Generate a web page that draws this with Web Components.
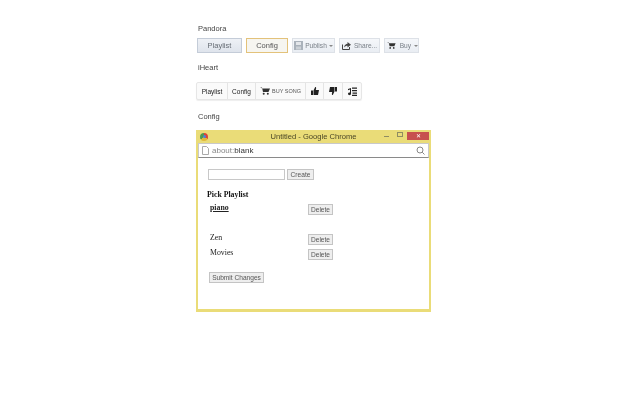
<!DOCTYPE html>
<html>
<head>
<meta charset="utf-8">
<title>Playlist config</title>
<style>
  body { margin: 0; background: #fff; font-family: "Liberation Sans", sans-serif; color: #444; }
  #page { display: flex; flex-direction: column; align-items: flex-start; padding: 24px 0 0 196px; will-change: transform; }
</style>
</head>
<body>
<div id="page">
  <section-label style="height:14px">Pandora</section-label>
  <pandora-bar></pandora-bar>
  <section-label style="margin-top:10px;height:18px">iHeart</section-label>
  <iheart-bar></iheart-bar>
  <section-label style="margin-top:12px;height:18px">Config</section-label>
  <chrome-window>
    <playlist-form></playlist-form>
  </chrome-window>
</div>

<script>
class SectionLabel extends HTMLElement {
  constructor(){
    super();
    this.attachShadow({mode: 'open'}).innerHTML = `
    <style>
      :host { display: block; padding-left: 2px; font-size: 7.5px; line-height: 9px; color: #444; }
    </style>
    <slot></slot>`;
  }
}

class PandoraBar extends HTMLElement {
  constructor(){
    super();
    this.attachShadow({mode: 'open'}).innerHTML = `
    <style>
      :host { display: flex; gap: 4px; padding-left: 1px; font-size: 6.6px; color: #7a8088; }
      .btn {
        display: flex; align-items: center; justify-content: center; gap: 2px;
        height: 15px; box-sizing: border-box;
        border: 1px solid #dde1e7; background: linear-gradient(#f5f7fa, #e9edf3);
      }
      .tab { font-size: 7.5px; color: #666c74; background: linear-gradient(#eef1f6, #dfe4ec); border-color: #c4ccd8; }
      .on { background: #f6f5f0; border-color: #e3c27a; color: #555; }
      .caret { width: 0; height: 0; border: 2px solid transparent; border-top-color: #888; border-bottom: 0; }
      svg { display: block; }
    </style>
    <div class="btn tab" style="width:45px">Playlist</div>
    <div class="btn tab on" style="width:42px">Config</div>
    <div class="btn" style="width:43px">
      <svg width="9" height="9" viewBox="0 0 9 9"><rect width="9" height="9" fill="#aab2bb"/><rect x="2" y="1" width="5" height="3" fill="#e3e6ea"/><rect x="2" y="5.500" width="5" height="3" fill="#ccd1d7"/></svg>
      Publish<span class="caret"></span>
    </div>
    <div class="btn" style="width:41px;gap:3px">
      <svg width="9" height="9" viewBox="0 0 9 9"><path d="M.5 3.500v5h7V6" fill="none" stroke="#444"/><path d="M2 6.500C2.400 4 4 2.800 5.500 2.800V1L9 3.800 5.500 6.500V4.800C4 4.800 3 5.300 2 6.500z" fill="#444"/></svg>
      Share...
    </div>
    <div class="btn" style="width:35px;gap:3px;padding-left:2px">
      <svg width="9" height="7" viewBox="0 0 10 8" style="margin-right:1px"><path d="M0 .5h2l1 4.500h5.500L10 1.500H2.500z" fill="#333"/><circle cx="3.700" cy="6.800" r="1" fill="#333"/><circle cx="7.800" cy="6.800" r="1" fill="#333"/></svg>
      Buy<span class="caret"></span>
    </div>`;
  }
}

class IheartBar extends HTMLElement {
  constructor(){
    super();
    this.attachShadow({mode: 'open'}).innerHTML = `
    <style>
      :host {
        display: flex; height: 18px; box-sizing: border-box; margin-top: 1px;
        border: 1px solid #e6e6e6; border-radius: 2px; background: #fafafa;
        font-size: 6.5px; color: #222; box-shadow: 0 1px 1px #eee;
      }
      div { display: flex; align-items: center; justify-content: center; gap: 2px; border-right: 1px solid #e4e4e4; box-sizing: border-box; }
      div:last-child { border-right: 0; }
      .buy { font-size: 5.500px; color: #555; }
      svg { display: block; }
    </style>
    <div style="width:31px">Playlist</div>
    <div style="width:28px">Config</div>
    <div class="buy" style="width:50px">
      <svg width="10" height="8" viewBox="0 0 10 8"><path d="M0 .5h2l1 4.500h5.500L10 1.500H2.500z" fill="#333"/><circle cx="3.700" cy="6.800" r="1" fill="#333"/><circle cx="7.800" cy="6.800" r="1" fill="#333"/></svg>
      BUY SONG
    </div>
    <div style="width:18px">
      <svg width="8" height="8" viewBox="0 0 8 8"><rect y="3.500" width="2" height="4.500" fill="#222"/><path d="M2.500 3.500 4.200 0c.8 0 1.100.7.900 1.500L4.800 3H8L7 8H2.500z" fill="#222"/></svg>
    </div>
    <div style="width:19px">
      <svg width="8" height="8" viewBox="0 0 8 8"><rect x="6" width="2" height="4.500" fill="#222"/><path d="M5.500 4.500 3.800 8c-.8 0-1.100-.7-.9-1.500L3.200 5H0L1 0h4.500z" fill="#222"/></svg>
    </div>
    <div style="width:18px">
      <svg width="9" height="9" viewBox="0 0 9 9"><path d="M4 .5h5v1.200H4zM4 3h5v1.200H4zM4.500 5.500h4.500v1.200H4.500zM4 7.800h5V9H4z" fill="#222"/><path d="M3 1v5.800a1.500 1.300 0 1 1-1-1.200V2.500L0 3.200V2z" fill="#222"/></svg>
    </div>`;
  }
}

class ChromeWindow extends HTMLElement {
  constructor(){
    super();
    this.attachShadow({mode: 'open'}).innerHTML = `
    <style>
      :host {
        display: block; width: 235px; height: 182px; box-sizing: border-box;
        background: #eadc78; padding: 0 2px 3px; color: #444;
        font-family: "Liberation Sans", sans-serif;
      }
      .title { display: grid; grid-template-columns: 1fr auto 1fr; align-items: center; height: 13px; font-size: 7.6px; }
      .title .name { color: #4a4626; }
      .logo { width: 8px; height: 8px; margin-left: 2px; border-radius: 50%; background: conic-gradient(#d9443a 0 33%, #e0b93a 33% 66%, #4d9a4e 66%); display: flex; align-items: center; justify-content: center; }
      .logo i { width: 3px; height: 3px; border-radius: 50%; background: #4a83d8; }
      .ctl { display: flex; justify-content: flex-end; align-self: start; }
      .min { width: 5px; height: 1px; background: #8f8c62; margin: 6px 8px 0 0; }
      .max { width: 4px; height: 3px; border: 1px solid #8f8c62; margin: 2px 4px 0 0; }
      .close { width: 22px; height: 8px; margin-top: 2px; background: #c7504f; color: #fff; font-size: 6px; line-height: 8px; text-align: center; }
      .addr {
        display: flex; align-items: center; gap: 3px; height: 15px; box-sizing: border-box;
        background: #fff; border: 1px solid #c9c9c9; border-bottom: 1px solid #8a8a8a;
        padding: 0 3px 0 3px; font-size: 8px; color: #888;
      }
      .addr b { font-weight: normal; color: #333; }
      .addr .url { flex: 1; }
      .body { background: #fff; height: 151px; }
      svg { display: block; }
    </style>
    <div class="title">
      <span class="logo"><i></i></span>
      <span class="name">Untitled - Google Chrome</span>
      <span class="ctl"><span class="min"></span><span class="max"></span><span class="close">&#x2715;</span></span>
    </div>
    <div class="addr">
      <svg width="7" height="9" viewBox="0 0 7 9"><path d="M.5.500h4l2 2v6h-6z" fill="none" stroke="#aaa"/></svg>
      <span class="url">about:<b>blank</b></span>
      <svg width="9" height="9" viewBox="0 0 9 9"><circle cx="4" cy="4" r="3" fill="none" stroke="#888"/><path d="M6.200 6.200 8.500 8.500" stroke="#888"/></svg>
    </div>
    <div class="body"><slot></slot></div>`;
  }
}

class PlaylistForm extends HTMLElement {
  constructor(){
    super();
    this.attachShadow({mode: 'open'}).innerHTML = `
    <style>
      :host { display: block; padding: 11px 0 0 10px; font-family: "Liberation Serif", serif; font-size: 7.8px; color: #222; }
      .btn {
        display: inline-block; box-sizing: border-box; height: 11px; line-height: 9px; white-space: nowrap;
        border: 1px solid #c4c4c4; background: #eee; color: #555; text-align: center;
        font-family: "Liberation Sans", sans-serif; font-size: 6.6px;
      }
      .new { display: flex; gap: 2px; }
      .box { width: 77px; height: 11px; box-sizing: border-box; border: 1px solid #c8c8c8; }
      h4 { margin: 10px 0 0 -1px; font-size: 7.8px; line-height: 10px; color: #111; }
      .row { display: grid; grid-template-columns: 98px 25px; padding-left: 2px; align-items: start; line-height: 10px; }
      .row .btn { width: 25px; }
      .pick { font-weight: bold; text-decoration: underline; }
      .submit { width: 55px; margin: 12px 0 0 1px; display: block; }
    </style>
    <div class="new"><div class="box"></div><span class="btn" style="width:27px">Create</span></div>
    <h4>Pick Playlist</h4>
    <div class="row" style="margin-top:3px"><span class="pick">piano</span><span class="btn" style="margin-top:1px">Delete</span></div>
    <div class="row" style="margin-top:19px"><span style="margin-top:-1px">Zen</span><span class="btn">Delete</span></div>
    <div class="row" style="margin-top:4px"><span style="margin-top:-1px">Movies</span><span class="btn">Delete</span></div>
    <span class="btn submit">Submit Changes</span>`;
  }
}

customElements.define('section-label', SectionLabel);
customElements.define('pandora-bar', PandoraBar);
customElements.define('iheart-bar', IheartBar);
customElements.define('chrome-window', ChromeWindow);
customElements.define('playlist-form', PlaylistForm);
</script>
</body>
</html>
